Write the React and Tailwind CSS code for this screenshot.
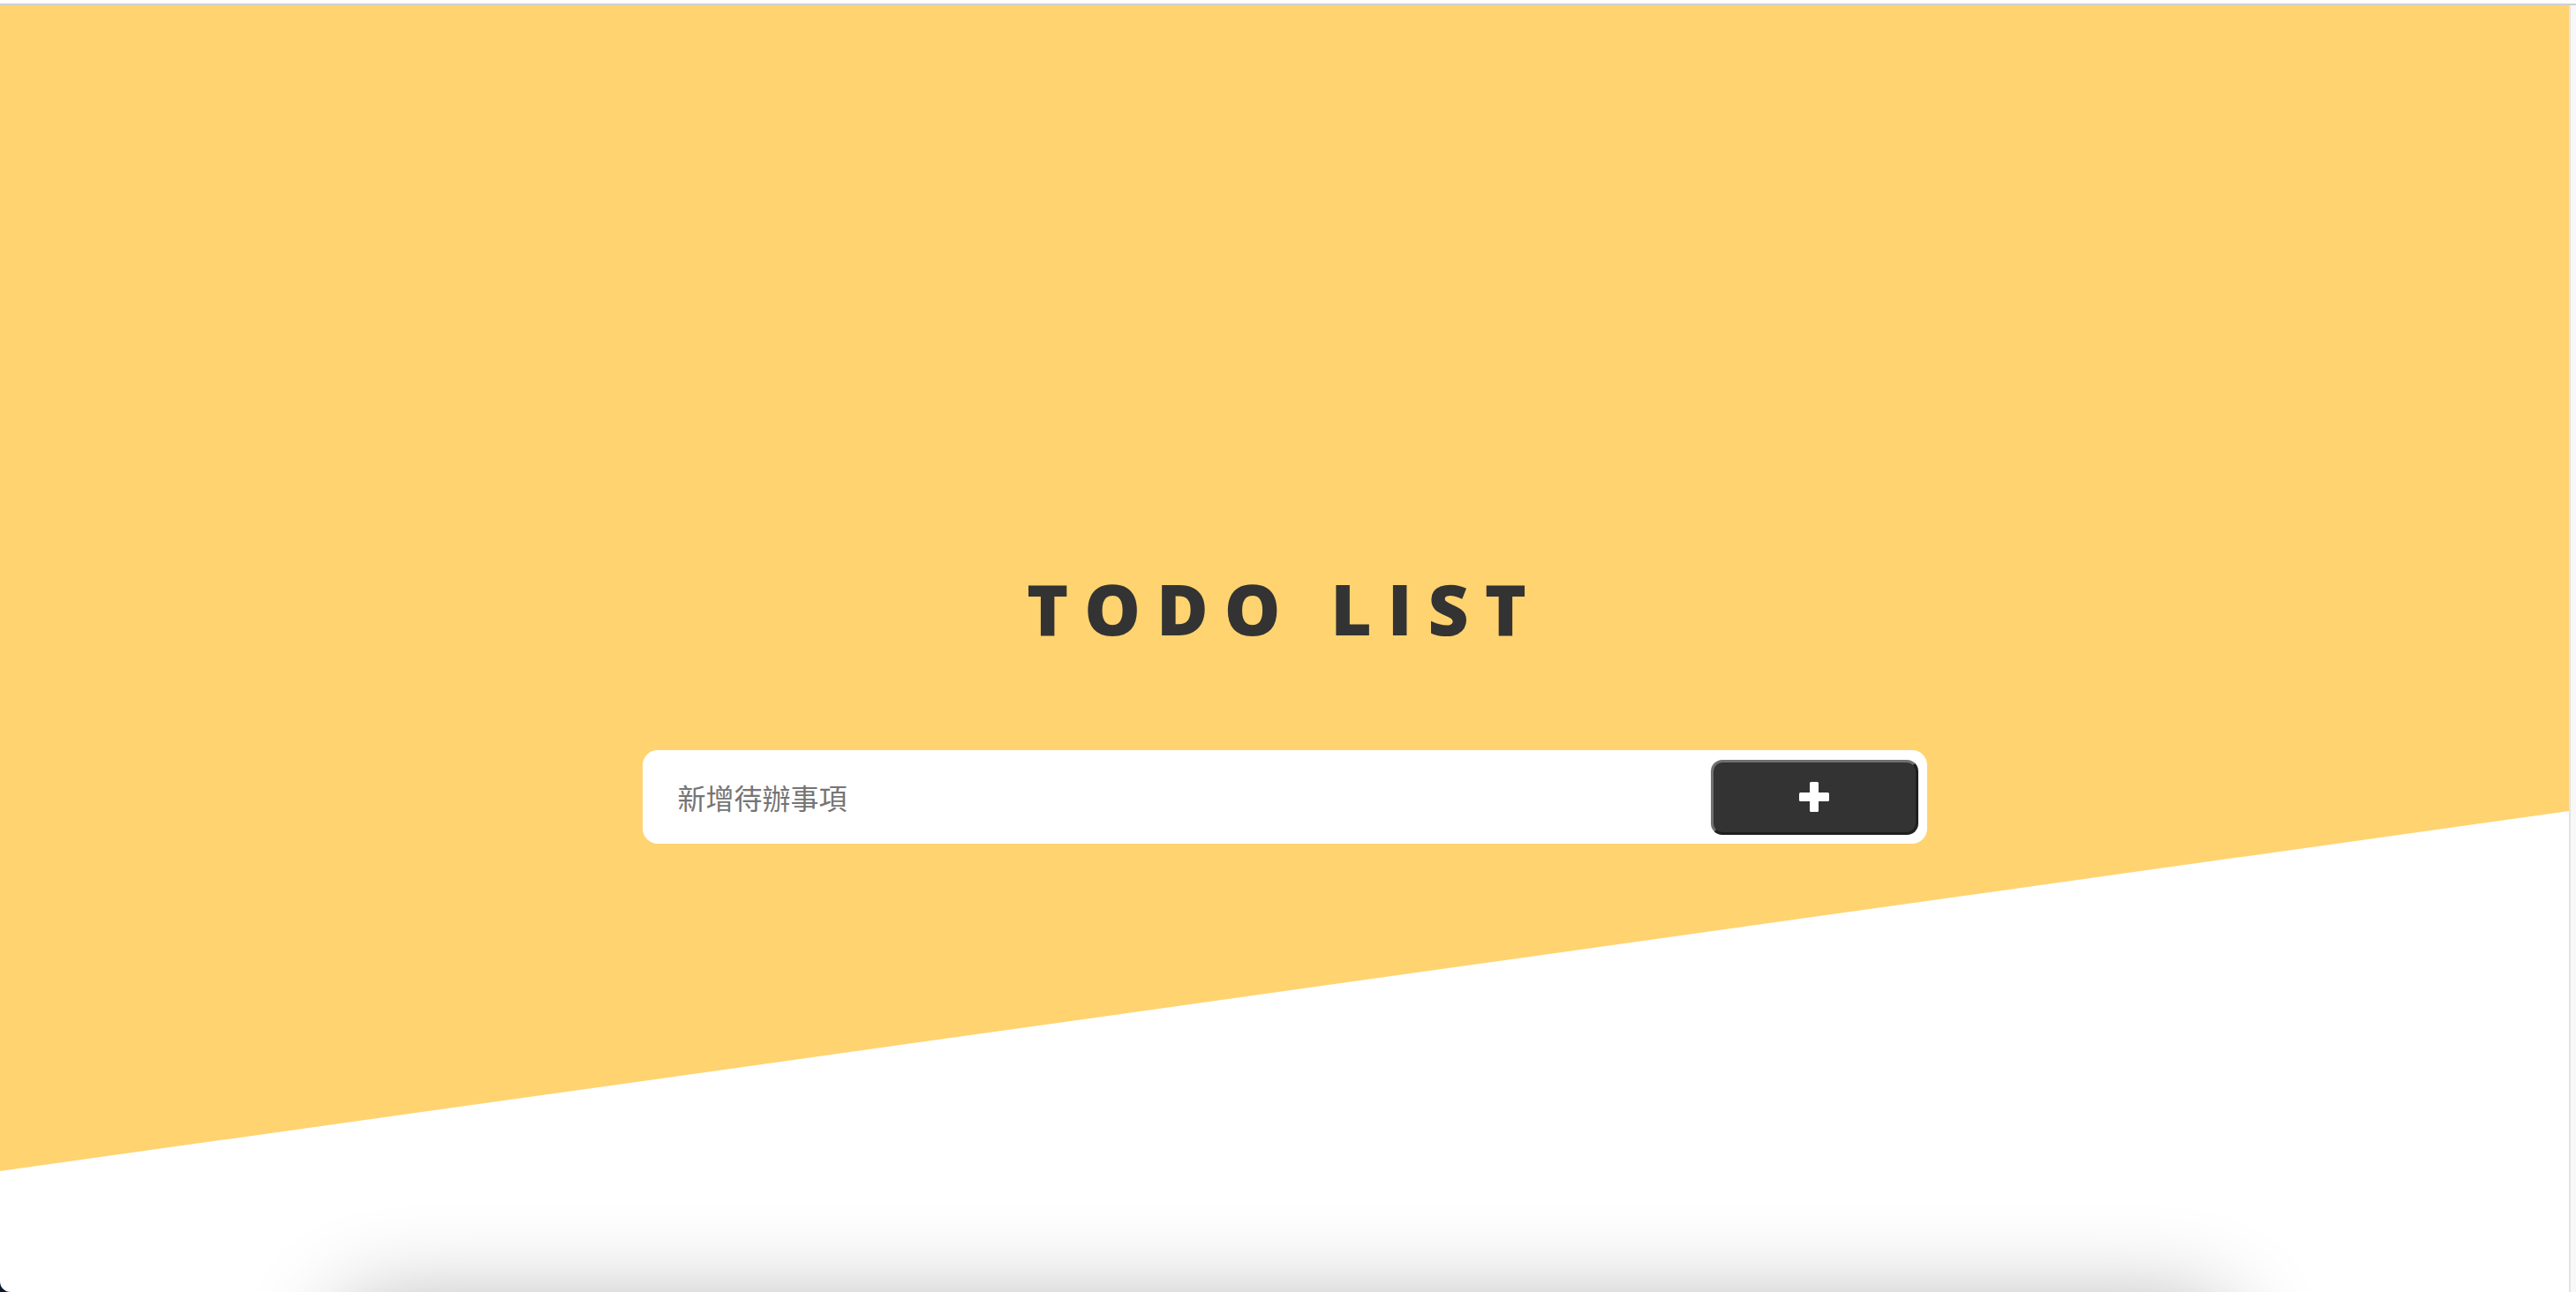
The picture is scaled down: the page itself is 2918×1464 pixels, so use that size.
import React, { useState } from 'react';

const PlusIcon = () => (
  <svg width="34" height="34" viewBox="0 0 34 34" fill="#ffffff">
    <rect x="12" y="0" width="10" height="34" rx="1.5" />
    <rect x="0" y="12" width="34" height="10" rx="1.5" />
  </svg>
);

const App = () => {
  const [todo, setTodo] = useState('');

  return (
    <div className="h-screen w-full overflow-hidden bg-[#0b1a2e]">
      <div className="flex h-full flex-col overflow-hidden rounded-bl-[12px] bg-white">
        {/* top edge of the window */}
        <div className="h-[6px] shrink-0 border-b-2 border-[#cfcfcf] bg-white" />

        <div className="flex min-h-0 flex-1">
          <main className="flex min-w-0 flex-1 flex-col">
            {/* yellow hero with slanted bottom */}
            <section className="h-[1321px] shrink-0 bg-[#ffd370] pt-[643px] [clip-path:polygon(0_0,100%_0,100%_913px,0_100%)]">
              <h1 className="text-center font-['Open_Sans',sans-serif] text-[80px] font-extrabold leading-none tracking-[18px] text-[#333333]">
                TODO LIST
              </h1>

              <form
                onSubmit={(e) => e.preventDefault()}
                className="mx-auto mt-[121px] flex h-[106px] w-[1455px] items-center rounded-[17px] bg-white pl-[40px] pr-[10px]"
              >
                <input
                  type="text"
                  value={todo}
                  onChange={(e) => setTodo(e.target.value)}
                  placeholder="新增待辦事項"
                  className="h-full min-w-0 flex-1 bg-transparent font-['Noto_Sans_CJK_TC','Noto_Sans',sans-serif] text-[32px] text-[#333333] outline-none placeholder:text-[#757575]"
                />
                <button
                  type="submit"
                  className="flex h-[85px] w-[235px] shrink-0 items-center justify-center rounded-[13px] border-[3px] border-b-[#1f1f1f] border-l-[#707070] border-r-[#1f1f1f] border-t-[#707070] bg-[#333333]"
                >
                  <PlusIcon />
                </button>
              </form>
            </section>

            {/* list card, mostly below the fold */}
            <div className="mx-auto mt-[153px] h-[600px] w-[2140px] shrink-0 rounded-[40px] bg-white shadow-[0_0_110px_rgba(0,0,0,0.32)]" />
          </main>

          {/* scrollbar track */}
          <div className="w-[8px] shrink-0 border-l-2 border-[#e3e3e3] bg-[#f8f8f8]" />
        </div>
      </div>
    </div>
  );
};

export default App;
